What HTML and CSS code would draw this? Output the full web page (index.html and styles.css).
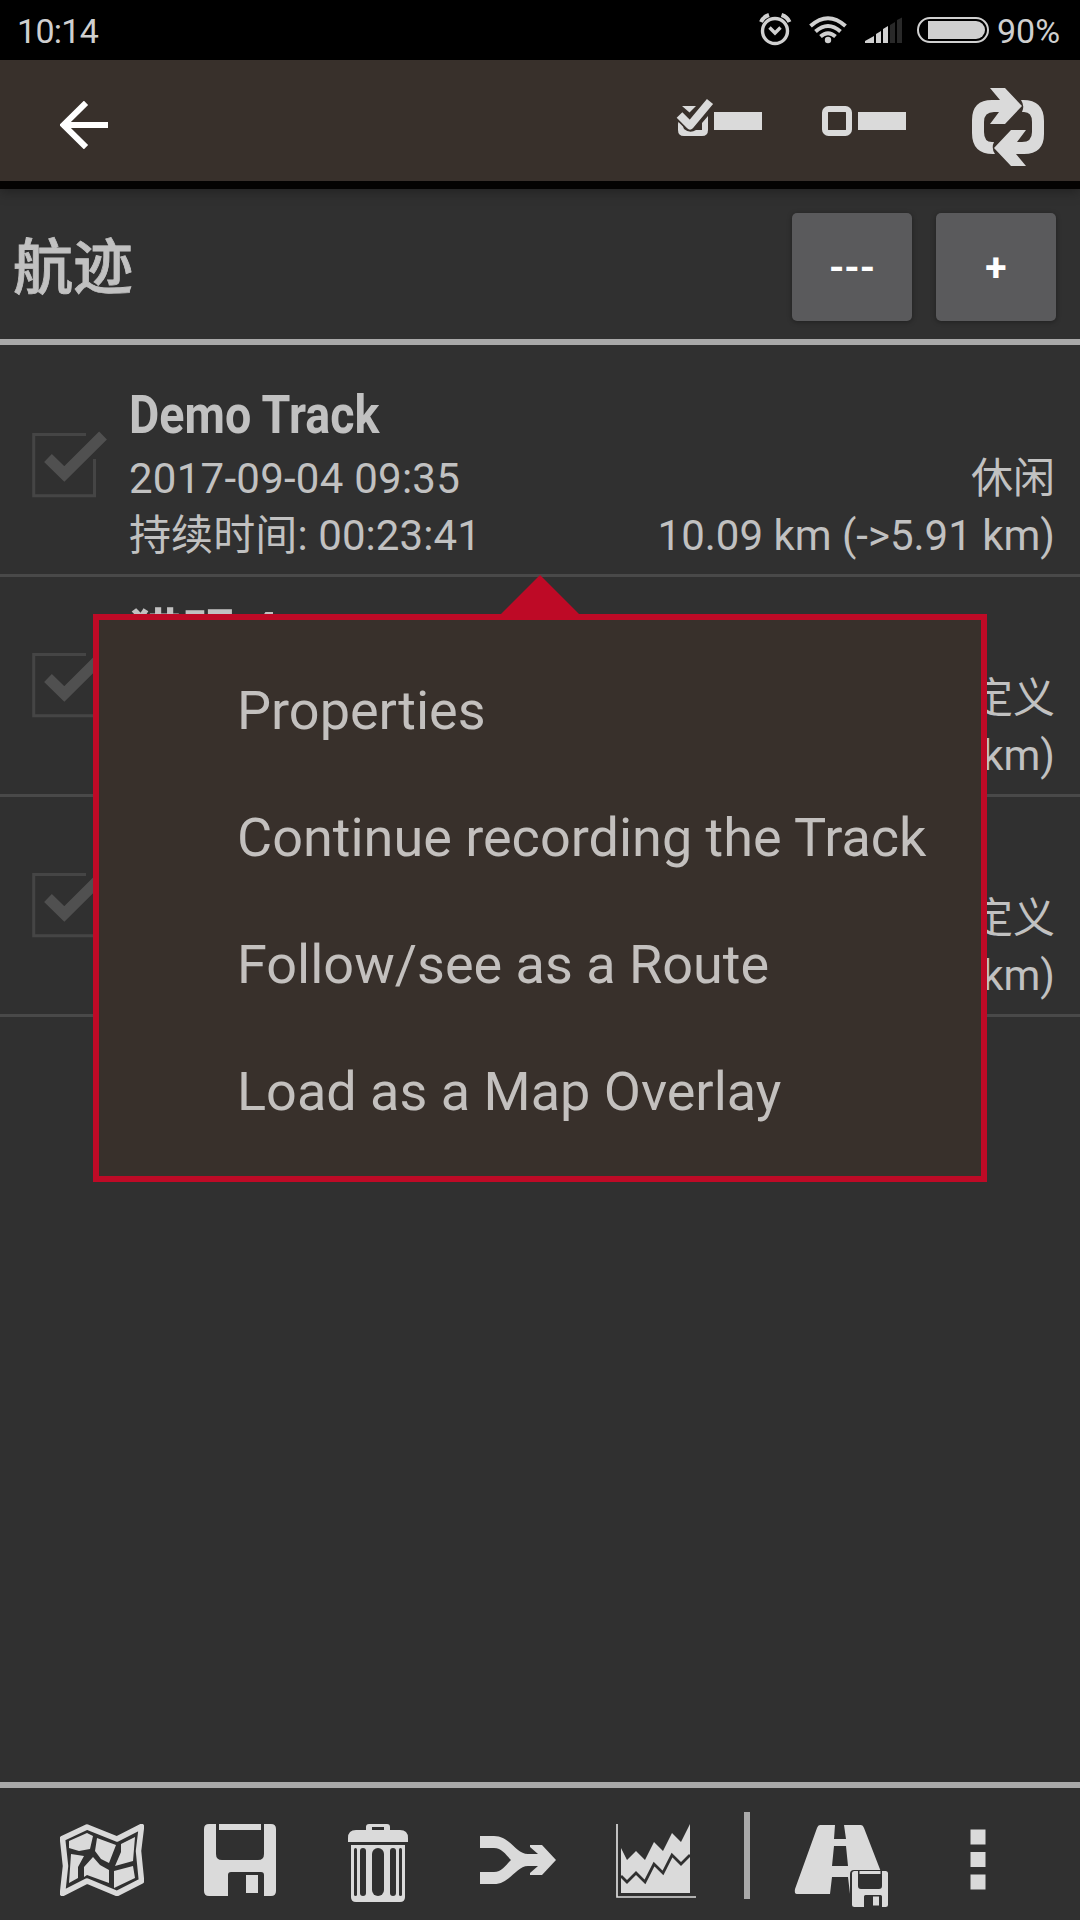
FILE: index.html
```html
<!DOCTYPE html>
<html lang="zh-CN">
<head>
<meta charset="utf-8">
<title>航迹</title>
<link rel="stylesheet" href="styles.css">
</head>
<body>
<svg width="0" height="0" class="defs" aria-hidden="true">
  <symbol id="checkbox" viewBox="0 0 80 72">
    <path d="M56 4.500H3.700V65.800H64.500V29" fill="none" stroke="#454545" stroke-width="3"/>
    <path d="M18 28 34.300 44 73 5.500" fill="none" stroke="#505050" stroke-width="11"/>
  </symbol>
  <symbol id="floppy" viewBox="0 0 72 72">
    <path fill-rule="evenodd" d="M5 0H12V30Q12 36 18 36H54Q60 36 60 30V0H67Q72 0 72 5V67Q72 72 67 72H60V51Q60 48 57 48H27Q24 48 24 51V72H5Q0 72 0 67V5Q0 0 5 0Z"/>
    <path d="M15 0H57V6H15ZM42 51H54V69H42Z"/>
  </symbol>
</svg>
<div class="screen">
  <header class="status">
    <span class="clock">10:14</span>
    <svg class="status-icons" width="236" height="60" viewBox="756 0 236 60">
      <g fill="none" stroke="#d0d0d0" stroke-width="3.400">
        <circle cx="775" cy="31" r="12.500"/>
        <path d="M769.500 27.500 775 33 780.500 27.500"/>
        <path d="M761 22Q763 17 769 15M789.500 22Q787.500 17 781.500 15" stroke-width="4"/>
      </g>
      <g fill="none" stroke="#d0d0d0" stroke-width="4">
        <path d="M810.500 26Q828 10.500 845.500 26M815.500 31.500Q828 20.500 840.500 31.500M820.500 36.500Q828 30 835.500 36.500"/>
      </g>
      <circle cx="828" cy="40" r="3.200" fill="#d0d0d0"/>
      <path fill="#d0d0d0" d="M865 43V41L874 36V43ZM876 43V34L881 31V43ZM883 43V29L888 26V43Z"/>
      <path fill="#292929" d="M890 43V25L895 22V43ZM897 43V20L902 17.500V43Z"/>
      <rect x="918" y="18" width="70" height="24" rx="12" fill="none" stroke="#d0d0d0" stroke-width="2"/>
      <path fill="#d0d0d0" d="M928 21H976A9 9 0 0 1 976 39H928Z"/>
    </svg>
    <span class="battery">90%</span>
  </header>

  <nav class="toolbar">
    <svg class="back" width="48" height="48" viewBox="0 0 48 48"><path d="M48 24H5M26 1.800 3.500 24 26 46.200" fill="none" stroke="#fff" stroke-width="6"/></svg>
    <svg class="check-all" width="88" height="40" viewBox="0 0 88 40" fill="#dadada">
      <path d="M6 8H20L13.500 14.500Z"/>
      <path d="M5 23Q2 23 2 26V32Q2 38 8 38H26Q32 38 32 32V18L26 25V32H20Q14 36 8 31Z"/>
      <path d="M4 17 14 27 33 4.500" fill="none" stroke="#38302b" stroke-width="12" stroke-linejoin="round"/>
      <path d="M3.500 17 14 27.500 34 3.500" fill="none" stroke="#dadada" stroke-width="8" stroke-linejoin="round"/>
      <path d="M38 14H86V32H38Z"/>
    </svg>
    <svg class="uncheck-all" width="88" height="40" viewBox="0 0 88 40">
      <rect x="5" y="11" width="24" height="24" rx="3.500" fill="none" stroke="#dadada" stroke-width="6"/>
      <path fill="#dadada" d="M38 14H86V32H38Z"/>
    </svg>
    <svg class="refresh" width="72" height="78" viewBox="0 0 72 78" fill="#dadada">
      <path d="M18 0H33L50 18 33 36H18L27 24H22Q12 24 12 34V44Q12 54 20 54H22Q19 60 23 66H21Q0 66 0 45V32Q0 12 20 12H28Z"/>
      <path d="M54 78H39L22 60 39 42H54L45 54H50Q60 54 60 44V34Q60 24 52 24H50Q53 18 49 12H51Q72 12 72 33V46Q72 66 52 66H44Z"/>
    </svg>
  </nav>

  <section class="heading">
    <h1>航迹</h1>
    <button>---</button>
    <button>+</button>
  </section>

  <main class="tracks">
    <article class="track">
      <svg class="tick" width="80" height="72"><use href="#checkbox"/></svg>
      <div class="info">
        <h2><span class="condensed">Demo Track</span></h2>
        <p><span class="date">2017-09-04 09:35</span><span>休闲</span></p>
        <p><span class="duration">持续时间: 00:23:41</span><span>10.09 km (-&gt;5.91 km)</span></p>
      </div>
    </article>
    <article class="track">
      <svg class="tick" width="80" height="72"><use href="#checkbox"/></svg>
      <div class="info">
        <h2>猎明 <span class="digit">4</span></h2>
        <p><span></span><span>自定义</span></p>
        <p><span></span><span>km)</span></p>
      </div>
    </article>
    <article class="track">
      <svg class="tick" width="80" height="72"><use href="#checkbox"/></svg>
      <div class="info">
        <h2></h2>
        <p><span></span><span>自定义</span></p>
        <p><span></span><span>km)</span></p>
      </div>
    </article>
  </main>

  <footer class="actions">
    <svg class="map" width="84" height="72" viewBox="0 0 84 72">
      <path d="M2.500 14.500 27 3 57 15 81.500 2.500 78.500 27 81.500 57 57 69.500 27 57 2.500 69.500 5.500 42Z" fill="none" stroke="#dadada" stroke-width="5.500" stroke-linejoin="round"/>
      <path fill="#dadada" d="M9 17 27 9 33 12 30 25 19 27 9 24ZM37 14 56 21 49 39 41 35 35 27ZM61 20 75 13 73 37 55 42 61 28ZM11 30 24 32 18 43V54L9 59ZM33 33 40 41 49 46V59L27 51 24 53V43ZM54 47 73 42 75 54 54 64Z"/>
    </svg>
    <svg class="save" width="72" height="72" fill="#dadada"><use href="#floppy"/></svg>
    <svg class="trash" width="60" height="78" viewBox="0 0 60 78" fill="#dadada">
      <path fill-rule="evenodd" d="M0 18V14Q0 6 8 6H18V3Q18 0 21 0H39Q42 0 42 3V6H52Q60 6 60 14V18ZM24 3V6H36V3Z"/>
      <path d="M3 21H57V73Q57 78 52 78H8Q3 78 3 73Z"/>
      <g fill="#303030"><rect x="6" y="24" width="3" height="48" rx="1.500"/><rect x="12" y="24" width="6" height="48" rx="3"/><rect x="24" y="24" width="12" height="48" rx="6"/><rect x="42" y="24" width="6" height="48" rx="3"/><rect x="51" y="24" width="3" height="48" rx="1.500"/></g>
    </svg>
    <svg class="merge" width="76" height="48" viewBox="0 0 76 48" fill="#dadada">
      <path d="M0 0H14C30 0 36 18 48 18H58L50 11V9H62L76 24 62 39H50V37L58 30H48C36 30 30 48 14 48H0V36H14C22 36 26 29 31 24C26 19 22 12 14 12H0Z"/>
    </svg>
    <svg class="chart" width="80" height="74" viewBox="0 0 80 74">
      <path d="M1 0V73H80" fill="none" stroke="#dadada" stroke-width="1.700"/>
      <path fill="#dadada" d="M5 24 11 36 20 27 29 36 38 18 47 27 56 9 65 18 74 0V69H5Z"/>
      <path d="M5 52 11 58 20 49 29 58 38 40 47 49 56 31 65 40 74 31" fill="none" stroke="#303030" stroke-width="2.800"/>
    </svg>
    <i class="separator"></i>
    <svg class="road" width="95" height="84" viewBox="0 0 95 84">
      <path fill="#dadada" fill-rule="evenodd" d="M26 1H41L40 15H52L50 1H67Q69 1 70 4L94 66Q95 70 92 70H56L54 53H38L36 70H3Q0 70 1 65L23 4Q24 1 26 1ZM40 22 38 42H54L52 22Z"/>
      <path fill="#303030" d="M56 50Q56 46 60 46H95V84H56Z"/>
      <svg x="58" y="47" width="36" height="36" fill="#dadada"><use href="#floppy"/></svg>
    </svg>
    <svg class="more" width="16" height="61" viewBox="0 0 16 61"><path fill="#dadada" d="M.5.500H15.500V15.500H.5ZM.5 23H15.500V38H.5ZM.5 45.500H15.500V60.500H.5Z"/></svg>
  </footer>

  <div class="popup">
    <svg class="pointer" width="80" height="40" viewBox="0 0 80 40"><path fill="#be0a26" d="M40 0 80 40H0Z"/></svg>
    <ul>
      <li>Properties</li>
      <li>Continue recording the Track</li>
      <li>Follow/see as a Route</li>
      <li>Load as a Map Overlay</li>
    </ul>
  </div>
</div>
</body>
</html>
```
FILE: styles.css
```css
* { box-sizing: border-box; margin: 0; padding: 0; }
body { background: #303030; }
svg { display: block; flex: none; }
.defs { position: absolute; }
.screen {
  position: relative;
  width: 1080px;
  height: 1920px;
  display: flex;
  flex-direction: column;
  overflow: hidden;
  background: #303030;
  color: #c1c1c1;
  font-family: Roboto, "Noto Sans CJK SC", sans-serif;
}
.status {
  height: 60px;
  flex: none;
  display: flex;
  align-items: center;
  padding: 2px 0 0 17px;
  background: #000;
  color: #cfcfcf;
  font-size: 34px;
}
.clock { letter-spacing: -.7px; }
.status-icons { margin: -2px 5px 0 auto; }
.battery { width: 83px; }
.toolbar {
  height: 129px;
  flex: none;
  display: flex;
  align-items: flex-start;
  padding: 41px 36px 0 60px;
  background: #38302b;
  border-bottom: 8px solid #040302;
  box-shadow: 0 2px 12px rgba(0, 0, 0, .35);
}
.check-all { margin: -3px 0 0 568px; }
.uncheck-all { margin: -3px 0 0 56px; }
.refresh { margin: -13px 0 0 64px; }
.heading {
  height: 156px;
  flex: none;
  display: flex;
  align-items: flex-start;
  gap: 24px;
  padding: 24px 24px 0 13px;
  border-bottom: 6px solid #a9a9a9;
}
.heading h1 {
  flex: 1;
  padding-top: 2px;
  font-size: 60px;
  font-weight: 500;
  line-height: 108px;
  -webkit-text-stroke: .8px currentColor;
}
.heading button {
  width: 120px;
  height: 108px;
  padding-top: 3px;
  border: 0;
  border-radius: 5px;
  background: #5a5a5c;
  box-shadow: 0 1px 5px rgba(0, 0, 0, .35);
  color: #fff;
  font: 700 39px/105px Roboto, sans-serif;
}
.tracks { flex: 1; padding-top: 12px; }
.track {
  height: 220px;
  display: flex;
  padding: 0 25px 0 30px;
  border-bottom: 3px solid #494949;
}
.tick { margin-top: 73px; }
.info { flex: 1; margin-left: 19px; padding-top: 25px; }
.info h2 {
  height: 68px;
  font-size: 53px;
  line-height: 66px;
  white-space: nowrap;
}
.condensed { display: inline-block; transform: scaleX(.88); transform-origin: left; }
.digit { line-height: 1; vertical-align: 3px; }
.info p {
  display: flex;
  justify-content: space-between;
  height: 57px;
  font-size: 42px;
  line-height: 57px;
  white-space: nowrap;
}
.date { letter-spacing: .25px; }
.duration { letter-spacing: .1px; }
.actions {
  height: 138px;
  flex: none;
  display: flex;
  align-items: flex-start;
  padding: 36px 0 0 60px;
  border-top: 6px solid #a9a9a9;
}
.save { margin-left: 60px; }
.trash { margin-left: 72px; }
.merge { margin: 12px 0 0 72px; }
.chart { margin-left: 60px; }
.separator { width: 6px; height: 87px; margin: -12px 0 0 48px; background: #a9a9a9; }
.road { margin-left: 44px; }
.more { margin: 5px 0 0 81px; }
.popup {
  position: absolute;
  left: 93px;
  top: 614px;
  width: 894px;
  height: 568px;
  border: 6px solid #be0a26;
  background: #38302b;
}
.pointer { position: absolute; left: 401px; top: -45px; }
.popup ul {
  display: flex;
  flex-direction: column;
  padding: 27px 0 0 138px;
  list-style: none;
}
.popup li {
  height: 127px;
  color: #c3c0be;
  font-size: 54px;
  line-height: 127px;
  white-space: nowrap;
}
```
